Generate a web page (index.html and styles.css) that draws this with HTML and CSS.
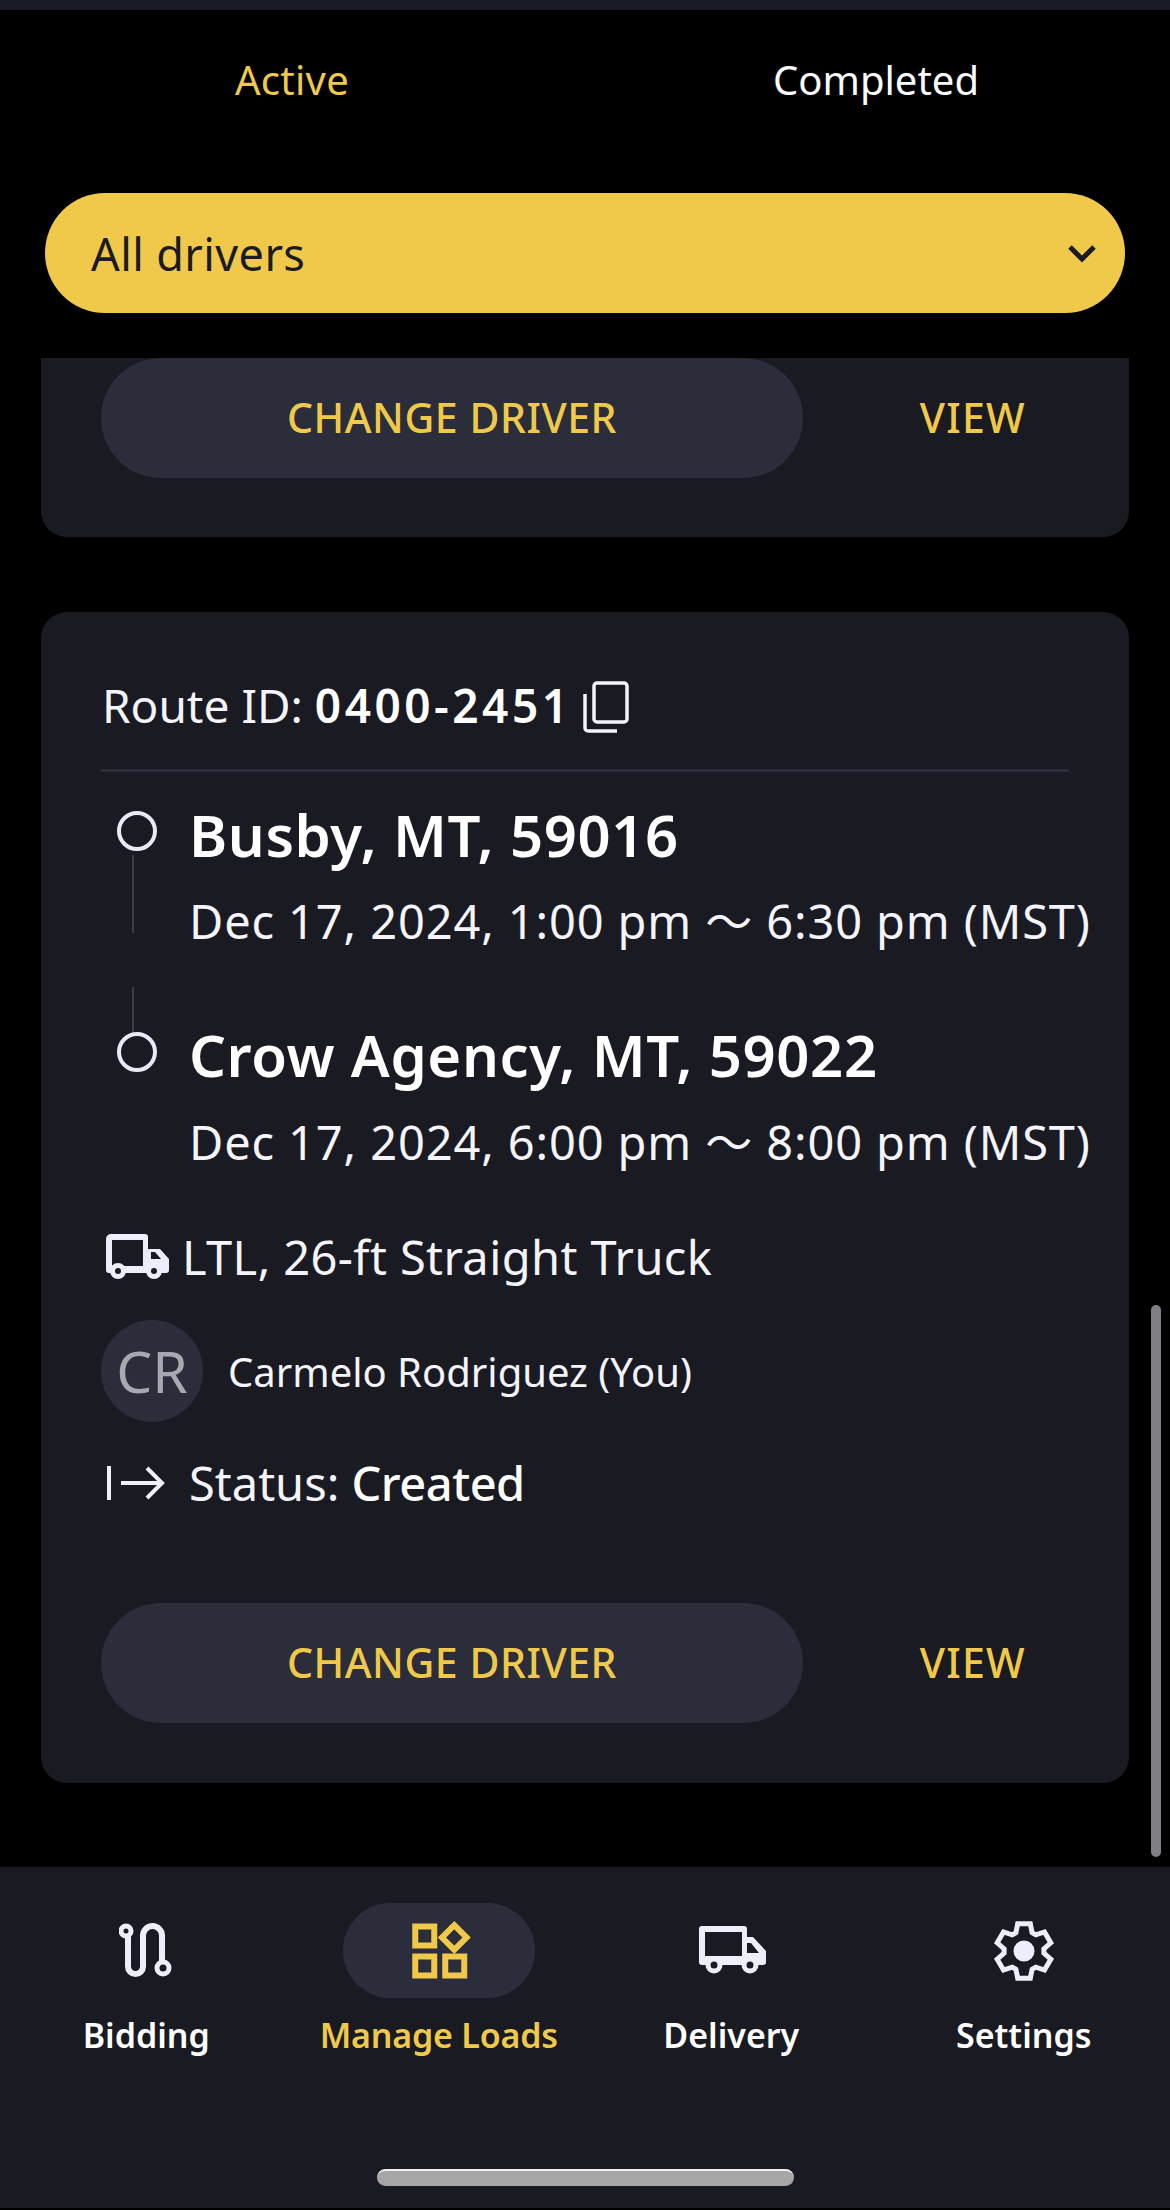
FILE: index.html
```html
<!DOCTYPE html>
<html lang="en">
<head>
<meta charset="utf-8">
<title>Manage Loads</title>
<link rel="stylesheet" href="styles.css">
</head>
<body>
<div class="app">
  <div class="status-strip"></div>
  <div class="tabs">
    <div class="tab tab-active">Active</div>
    <div class="tab">Completed</div>
  </div>
  <div class="select">
    <span>All drivers</span>
    <svg class="chevron" viewBox="0 0 30 20"><path d="M3 4l12 12L27 4"/></svg>
  </div>
  <div class="list">
    <div class="card card-cut">
      <div class="actions">
        <div class="btn-primary">CHANGE DRIVER</div>
        <div class="btn-link">VIEW</div>
      </div>
    </div>
    <div class="card card-full">
      <div class="route-row">
        <span class="route-text">Route ID: <b class="route-id">0400-2451</b></span>
        <svg class="copy" viewBox="0 0 46 52"><rect x="11" y="2" width="33" height="39" rx="3"/><path d="M2 13v34a3 3 0 0 0 3 3h29"/></svg>
      </div>
      <div class="divider"></div>
      <div class="stop stop-first">
        <div class="marker"><span class="dot"></span><span class="stem stem-long"></span></div>
        <div class="stop-text">
          <div class="city">Busby, MT, 59016</div>
          <div class="when">Dec 17, 2024, 1:00 pm 〜 6:30 pm (MST)</div>
        </div>
      </div>
      <div class="stop stop-second">
        <div class="marker"><span class="stem stem-short"></span><span class="dot"></span></div>
        <div class="stop-text stop-text-low">
          <div class="city">Crow Agency, MT, 59022</div>
          <div class="when">Dec 17, 2024, 6:00 pm 〜 8:00 pm (MST)</div>
        </div>
      </div>
      <div class="meta-row meta-truck">
        <svg class="truck" viewBox="0 0 66 46"><path class="truck-body" fill-rule="evenodd" d="M7 0H41a3 3 0 0 1 3 3V15H56L65 25V36a3 3 0 0 1-3 3H5a3 3 0 0 1-3-3V5a5 5 0 0 1 5-5zM8 6V32H39V6zM47 18V25H57L51 18z"/><circle class="truck-wheel" cx="14" cy="37" r="5.500"/><circle class="truck-wheel" cx="50" cy="37" r="5.500"/></svg>
        <span>LTL, 26-ft Straight Truck</span>
      </div>
      <div class="driver-row">
        <div class="avatar">CR</div>
        <span class="driver-name">Carmelo Rodriguez (You)</span>
      </div>
      <div class="meta-row meta-status">
        <svg class="status-icon" viewBox="0 0 58 36"><path d="M2 1v34M14 18h41M40 3l15 15-15 15"/></svg>
        <span>Status: <b class="status-value">Created</b></span>
      </div>
      <div class="actions actions-last">
        <div class="btn-primary">CHANGE DRIVER</div>
        <div class="btn-link">VIEW</div>
      </div>
    </div>
    <div class="scrollbar"></div>
  </div>
  <nav class="nav">
    <div class="nav-items">
      <div class="nav-item">
        <div class="nav-icon">
          <svg class="icon-bid" viewBox="0 0 54 56"><path d="M9 12V43.500a7.500 7.500 0 0 0 15 0V12.500a9.500 9.500 0 0 1 19 0V38"/><circle cx="7" cy="8" r="5"/><circle cx="44" cy="45" r="6"/></svg>
        </div>
        <div class="nav-label">Bidding</div>
      </div>
      <div class="nav-item nav-item-active">
        <div class="nav-icon nav-pill">
          <svg class="icon-loads" viewBox="0 0 60 60"><rect x="6.250" y="5.500" width="19" height="19"/><rect x="6.250" y="35.500" width="19" height="19"/><rect x="36.250" y="35.500" width="19" height="19"/><path d="M45.250 4.200l12.300 12.300-12.300 12.300-12.300-12.300z"/></svg>
        </div>
        <div class="nav-label">Manage Loads</div>
      </div>
      <div class="nav-item">
        <div class="nav-icon">
          <svg class="icon-truck" viewBox="-2 0 68 50"><path class="truck-body" fill-rule="evenodd" d="M3 0H45a3 3 0 0 1 3 3V11H54L67 25V36a3 3 0 0 1-3 3H3a3 3 0 0 1-3-3V3a3 3 0 0 1 3-3zM6 6V30H43V6zM48 17V27H60L52 17z"/><circle class="wheel" cx="15" cy="39" r="6"/><circle class="wheel" cx="51" cy="39" r="6"/></svg>
        </div>
        <div class="nav-label">Delivery</div>
      </div>
      <div class="nav-item">
        <div class="nav-icon">
          <svg class="icon-gear" viewBox="0 0 60 62"><path d="M23.700 3.700H36.300L38.100 12.700 41.800 14.800 50.500 11.900 56.800 22.800 49.900 28.900V33.100L56.800 39.200 50.500 50.100 41.800 47.200 38.100 49.300 36.300 58.300H23.700L21.900 49.300 18.200 47.200 9.500 50.100 3.200 39.200 10.100 33.100V28.900L3.200 22.800 9.500 11.900 18.200 14.800 21.900 12.700z"/><circle class="gear-hub" cx="30" cy="31" r="10.500"/></svg>
        </div>
        <div class="nav-label">Settings</div>
      </div>
    </div>
    <div class="home-bar"></div>
  </nav>
</div>
</body>
</html>
```
FILE: styles.css
```css
* { box-sizing: border-box; }
html, body { margin: 0; padding: 0; background: #000; }
body { font-family: "Noto Sans", "Noto Sans CJK JP", sans-serif; color: #f4f4fa; }
.app { width: 1170px; height: 2210px; display: flex; flex-direction: column; background: #000; overflow: hidden; }
.status-strip { height: 10px; background: #1b1b25; flex: none; }

.tabs { height: 142px; display: grid; grid-template-columns: 1fr 1fr; align-items: center; flex: none; padding: 0 2px 2px 0; }
.tab { text-align: center; font-size: 40px; line-height: 50px; color: #fff; }
.tab-active { color: #f0c94b; letter-spacing: 0.3px; }

.select { height: 120px; margin: 41px 45px 0; border-radius: 60px; background: #f1c94a; color: #1b1b25; display: flex; align-items: center; justify-content: space-between; padding: 0 28px 0 46px; font-size: 45px; letter-spacing: 0.4px; flex: none; }
.chevron { width: 30px; height: 20px; fill: none; stroke: #1b1b25; stroke-width: 5; }

.list { flex: 1; margin-top: 45px; padding: 0 41px; position: relative; overflow: hidden; }
.card { background: #1a1a23; padding: 0 60px; }
.card-cut { height: 179px; border-radius: 0 0 26px 26px; }
.card-full { height: 1171px; margin-top: 75px; padding-top: 68px; border-radius: 26px; }

.actions { display: grid; grid-template-columns: 702px 1fr; align-items: center; }
.actions-last { margin-top: 95px; }
.btn-primary { height: 120px; padding-bottom: 2px; border-radius: 60px; background: #2c2d3a; color: #f0c94b; display: flex; align-items: center; justify-content: center; font-size: 41px; letter-spacing: 0.55px; font-weight: 500; }
.btn-link { justify-self: end; padding: 0 43px 2px 0; color: #f0c94b; font-size: 41px; letter-spacing: 1.3px; font-weight: 500; }

.route-row { height: 53px; display: flex; align-items: center; font-size: 46px; padding-left: 1px; gap: 11px; }
.route-text { padding-bottom: 4px; white-space: nowrap; }
.route-id { font-weight: 600; color: #fff; letter-spacing: 3.500px; }
.copy { width: 46px; height: 52px; flex: none; fill: none; stroke: #f4f4fa; stroke-width: 3.500; }
.divider { height: 3px; margin-top: 36px; background: #2c2d3a; }

.stop { display: flex; }
.stop-first { margin-top: 33px; }
.stop-second { margin-top: 36px; }
.marker { width: 88px; padding-left: 16px; display: flex; flex-direction: column; flex: none; }
.stop-first .marker { padding-top: 6px; }
.dot { width: 40px; height: 40px; border: 4px solid #e8e8f6; border-radius: 50%; display: block; }
.stem { width: 2px; margin-left: 15px; background: #3c3d4a; display: block; }
.stem-long { height: 78px; margin-top: 4px; }
.stem-short { height: 45px; }
.stop-text { min-width: 0; }
.stop-text-low { padding-top: 38px; }
.city { font-size: 58px; line-height: 60px; font-weight: 600; color: #fff; white-space: nowrap; letter-spacing: 0.6px; }
.when { font-size: 47px; line-height: 60px; margin-top: 26px; white-space: nowrap; letter-spacing: 0.87px; }
.stop-second .when { margin-top: 27px; }

.meta-row { display: flex; align-items: center; height: 50px; font-size: 47px; white-space: nowrap; }
.meta-truck { margin-top: 60px; padding-left: 3px; gap: 12px; letter-spacing: 0.4px; }
.truck { width: 66px; height: 46px; flex: none; overflow: visible; }
.truck-wheel { fill: #1a1a23; stroke: #eeeefa; stroke-width: 5; }
.driver-row { display: flex; align-items: center; margin-top: 38px; gap: 25px; }
.avatar { width: 102px; height: 102px; border-radius: 50%; background: #2c2d3a; color: #a8a8b0; display: flex; align-items: center; justify-content: center; font-size: 57px; }
.driver-name { font-size: 40px; }
.meta-status { margin-top: 36px; padding-left: 6px; gap: 24px; }
.status-icon { width: 58px; height: 36px; flex: none; fill: none; stroke: #f0f0fa; stroke-width: 4; }
.status-value { font-weight: 500; color: #fff; letter-spacing: -0.5px; }

.scrollbar { position: absolute; left: 1151px; top: 947px; width: 10px; height: 552px; border-radius: 5px; background: #808084; }

.nav { height: 341px; margin-bottom: 2px; background: #1a1a23; display: flex; flex-direction: column; flex: none; }
.nav-items { display: grid; grid-template-columns: repeat(4, 1fr); padding-top: 36px; }
.nav-item { display: flex; flex-direction: column; align-items: center; }
.nav-icon { width: 192px; height: 95px; display: flex; align-items: center; justify-content: center; border-radius: 48px; }
.nav-pill { background: #2c2d3a; }
.nav-label { margin-top: 17px; font-size: 34px; line-height: 40px; font-weight: 600; color: #fff; white-space: nowrap; }
.nav-item-active .nav-label { color: #f0c94b; letter-spacing: -0.2px; }
.icon-bid { width: 54px; height: 56px; fill: none; stroke: #eeeefa; stroke-width: 6; }
.icon-bid circle { stroke-width: 5; }
.icon-loads { width: 60px; height: 60px; overflow: visible; fill: none; stroke: #f0c94b; stroke-width: 6; }
.icon-truck { width: 68px; height: 50px; overflow: visible; }
.truck-body { fill: #eeeefa; }
.wheel { fill: #1a1a23; stroke: #eeeefa; stroke-width: 5; }
.icon-gear { width: 60px; height: 62px; fill: none; stroke: #eeeefa; stroke-width: 5; }
.gear-hub { fill: #eeeefa; stroke: none; }
.home-bar { width: 417px; height: 17px; margin: auto auto 22px; border-radius: 9px; background: #a6a6a6; border-top: 2px solid #f0f0f0; }
```
